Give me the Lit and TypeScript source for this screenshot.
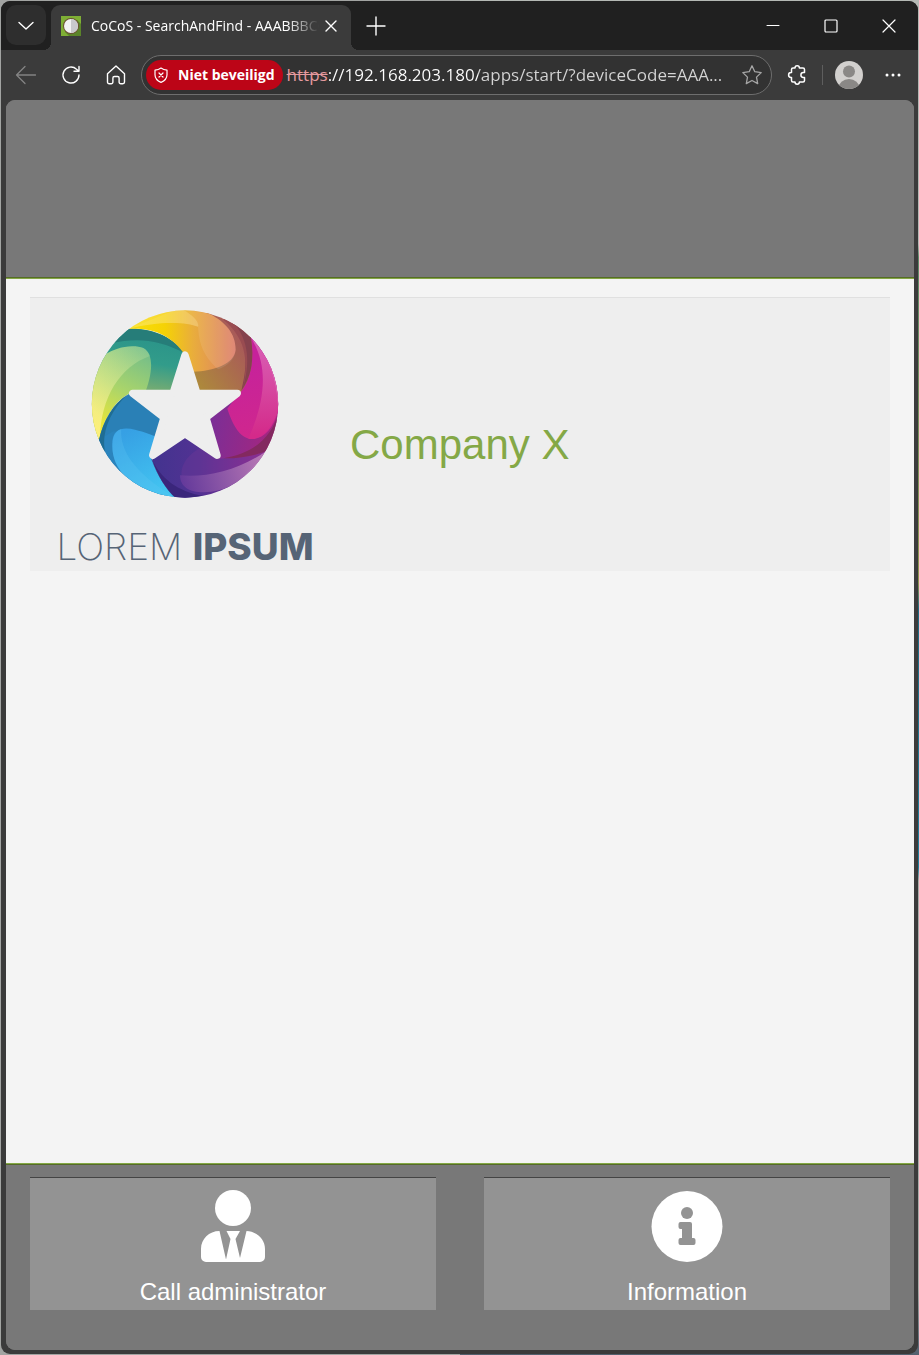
import { LitElement, html, css, svg } from "lit";
import { customElement, property } from "lit/decorators.js";

@customElement("company-logo")
class CompanyLogo extends LitElement {
  static styles = css`
    :host { display: flex; flex-direction: column; align-items: center; padding-top: 10px; }
    .wheel { display: block; width: 188px; height: 190px; }
    .name {
      margin-top: 24px;
      font: 200 37px/46px Inter, "Open Sans", sans-serif;
      color: #566476;
      white-space: nowrap;
    }
    .name b { font-weight: 800; }
  `;

  render() {
    return html`
      <svg class="wheel" viewBox="33 46 564 570" role="img" aria-label="Star wheel">
        <defs>
          <clipPath id="disc"><ellipse cx="315" cy="328" rx="279.5" ry="281" /></clipPath>
          <linearGradient id="gOrange" gradientUnits="userSpaceOnUse" x1="150" y1="0" x2="466" y2="0">
            <stop offset="0" stop-color="#f8e008" /><stop offset=".33" stop-color="#f5d205" />
            <stop offset=".6" stop-color="#e9ad3c" /><stop offset="1" stop-color="#dc7d6a" />
          </linearGradient>
          <linearGradient id="gBrown" gradientUnits="userSpaceOnUse" x1="345" y1="250" x2="500" y2="150">
            <stop offset="0" stop-color="#ad883c" /><stop offset="1" stop-color="#a8585a" />
          </linearGradient>
          <linearGradient id="gTeal" gradientUnits="userSpaceOnUse" x1="230" y1="120" x2="200" y2="290">
            <stop offset="0" stop-color="#2a9389" /><stop offset=".5" stop-color="#329c8a" /><stop offset="1" stop-color="#7bad70" />
          </linearGradient>
          <linearGradient id="gGreen" gradientUnits="userSpaceOnUse" x1="180" y1="160" x2="60" y2="400">
            <stop offset="0" stop-color="#72bd8b" /><stop offset=".5" stop-color="#a9d46b" /><stop offset="1" stop-color="#f0e834" />
          </linearGradient>
          <linearGradient id="gPale" gradientUnits="userSpaceOnUse" x1="40" y1="350" x2="205" y2="170">
            <stop offset="0" stop-color="#fff29a" stop-opacity=".7" /><stop offset="1" stop-color="#d2eda5" stop-opacity=".2" />
          </linearGradient>
          <linearGradient id="gSky" gradientUnits="userSpaceOnUse" x1="140" y1="410" x2="240" y2="600">
            <stop offset="0" stop-color="#36a0e4" /><stop offset="1" stop-color="#43c5f1" />
          </linearGradient>
          <linearGradient id="gPurple" gradientUnits="userSpaceOnUse" x1="230" y1="0" x2="550" y2="0">
            <stop offset="0" stop-color="#44338f" /><stop offset=".4" stop-color="#523293" /><stop offset="1" stop-color="#8b2c90" />
          </linearGradient>
          <linearGradient id="gLilac" gradientUnits="userSpaceOnUse" x1="300" y1="570" x2="550" y2="500">
            <stop offset="0" stop-color="#62389a" /><stop offset="1" stop-color="#b777b4" />
          </linearGradient>
          <linearGradient id="gPlum" gradientUnits="userSpaceOnUse" x1="390" y1="400" x2="580" y2="440">
            <stop offset="0" stop-color="#7c2e96" /><stop offset="1" stop-color="#a5267f" />
          </linearGradient>
          <linearGradient id="gMagenta" gradientUnits="userSpaceOnUse" x1="500" y1="200" x2="560" y2="430">
            <stop offset="0" stop-color="#c6229b" /><stop offset="1" stop-color="#d0278d" />
          </linearGradient>
          <linearGradient id="gPink" gradientUnits="userSpaceOnUse" x1="550" y1="150" x2="560" y2="420">
            <stop offset="0" stop-color="#d95cb4" /><stop offset=".5" stop-color="#d6469f" /><stop offset="1" stop-color="#d42a8a" />
          </linearGradient>
        </defs>
        <g clip-path="url(#disc)">
          <path fill="url(#gTeal)" d="M130 103 C215 96 280 130 318 180 L270 300 L150 290 C100 320 70 380 58 434 L20 430 V60Z" />
          <path fill="#267d79" d="M120 104 C215 94 275 125 318 178 C235 130 160 130 95 146Z" />
          <path fill="url(#gGreen)" d="M50 196 C110 152 160 150 190 160 C226 180 215 245 193 300 L150 296 C100 320 70 380 58 434 L20 430 V196Z" />
          <path fill="url(#gPale)" d="M50 196 C110 152 160 150 190 160 C200 165 207 175 210 184 C120 215 62 310 60 430 L20 430 V196Z" />
          <path fill="#2a80b6" d="M58 434 C70 380 100 325 150 296 L255 375 L216 495 C235 550 268 595 294 612 L200 640 L20 500Z" />
          <path fill="#1f6d94" d="M57 434 C70 380 98 327 142 300 C88 350 62 420 76 475 C100 545 170 590 240 612 L100 600 L30 480Z" />
          <path fill="#2b84bd" d="M75 425 C66 480 100 540 160 575 L260 615 L215 490 L225 425 L100 410Z" />
          <path fill="url(#gSky)" d="M97 450 C96 400 130 397 165 405 C195 412 213 420 235 428 L212 490 C232 545 265 595 292 614 L230 600 C160 575 95 530 97 450Z" />
          <path fill="#62c7f5" fill-opacity=".25" d="M124 402 C117 480 185 550 290 611 L230 602 C150 575 94 520 97 450 C98 420 110 407 124 402Z" />
          <path fill="url(#gPurple)" d="M216 495 L315 415 L420 485 C480 490 530 482 570 462 L540 580 L350 640 L292 612 C265 590 235 550 216 495Z" />
          <path fill="#3a267b" d="M216 494 C240 548 290 592 375 605 L292 615 C262 590 235 550 216 494Z" />
          <path fill="#8a3c9a" fill-opacity=".22" d="M305 545 C300 510 325 480 360 460 L420 490 C480 490 530 482 560 468 C480 535 380 550 305 545Z" />
          <path fill="url(#gLilac)" d="M300 542 C380 550 480 525 560 468 C530 520 500 548 490 556 C410 605 300 610 300 542Z" />
          <path fill="#d19aca" fill-opacity=".25" d="M440 585 C485 555 520 520 557 472 L580 490 L500 590Z" />
          <path fill="url(#gPlum)" d="M508 118 L620 200 L610 440 L556 470 C520 486 470 492 410 492 L380 375 L470 290 C520 250 520 180 508 118Z" />
          <path fill="#832960" d="M600 340 C580 420 530 475 430 491 C480 492 530 482 560 468 L620 420Z" />
          <path fill="url(#gMagenta)" d="M508 118 L620 200 L600 330 C585 400 550 435 515 433 C475 430 455 380 442 342 L480 292 C515 250 525 190 508 118Z" />
          <path fill="url(#gPink)" d="M508 122 C565 205 560 310 505 432 C550 440 583 390 600 330 L610 200Z" />
          <path fill="#f0b4dc" fill-opacity=".34" d="M508 122 C560 170 590 245 594 335 L620 280 L600 160Z" />
          <path fill="url(#gBrown)" d="M380 48 L470 70 L512 126 C525 200 510 255 482 292 L360 300 L335 230Z" />
          <path fill="#85424d" d="M448 70 L512 126 C525 195 512 250 484 288 C505 205 505 135 448 78Z" />
          <path fill="#994c51" d="M440 68 L458 80 C510 140 510 210 488 284 C508 190 494 128 430 75Z" />
          <path fill="url(#gOrange)" d="M144 103 L160 40 H370 L390 58 C435 82 467 115 467 165 C462 210 400 228 340 231 L315 180 C275 125 225 97 144 103Z" />
          <path fill="#ffe9a0" fill-opacity=".28" d="M144 103 C230 80 315 80 354 96 C360 80 330 55 300 40 L160 60Z" />
          <path fill="#fff" fill-opacity=".09" d="M144 103 C230 80 315 80 354 96 C357 140 365 180 415 224 C445 212 464 195 467 165 C467 115 435 82 390 58 L300 40Z" />
        </g>
        <path fill="#eee" stroke="#eee" stroke-width="22" stroke-linejoin="round"
          d="M315 181 L351 296 H472 L378 369 L411 482 L315 417 L218 482 L252 369 L158 296 H279Z" />
      </svg>
      <div class="name">LOREM <b>IPSUM</b></div>
    `;
  }
}

@customElement("browser-bar")
class BrowserBar extends LitElement {
  static styles = css`
    :host { display: block; font-family: "Open Sans", "Noto Sans", sans-serif; color: #fff; }
    button { all: unset; box-sizing: border-box; display: flex; align-items: center; justify-content: center; cursor: pointer; flex: none; }
    svg { display: block; flex: none; fill: none; stroke: currentColor; stroke-linecap: round; stroke-linejoin: round; }
    .solid { stroke: none; }
    .tabs { display: flex; height: 49px; padding: 4px 0 0 5px; box-sizing: border-box; background: #202020; }
    .menu { width: 40px; height: 40px; padding-top: 2px; border-radius: 10px; background: #2e2e2e; }
    .tab {
      position: relative; display: flex; align-items: center; box-sizing: border-box;
      width: 300px; height: 45px; margin-left: 5px; padding: 0 8px 4px 10px;
      background: #3b3b3b; border-radius: 9px 9px 0 0;
    }
    .tab::before, .tab::after { content: ""; position: absolute; bottom: 0; width: 8px; height: 8px; }
    .tab::before { left: -8px; background: radial-gradient(circle at 0 0, #202020 8px, #3b3b3b 8px); }
    .tab::after { right: -8px; background: radial-gradient(circle at 100% 0, #202020 8px, #3b3b3b 8px); }
    .title {
      flex: 1; min-width: 0; margin-left: 10px; overflow: hidden; white-space: nowrap;
      font-size: 14px; line-height: 20px;
      -webkit-mask-image: linear-gradient(90deg, #000 86%, transparent);
      mask-image: linear-gradient(90deg, #000 86%, transparent);
    }
    .close { width: 24px; height: 24px; }
    .new { width: 50px; height: 41px; }
    .space { flex: 1; }
    .win { width: 58px; height: 42px; }
    .tools { display: flex; align-items: center; height: 50px; padding: 0 7px 0 2px; background: #3b3b3b; }
    .tool { width: 45px; height: 40px; }
    .back { color: #838383; }
    .address {
      flex: 1; min-width: 0; display: flex; align-items: center; box-sizing: border-box;
      height: 40px; margin-left: 3px; padding: 0 8px 0 4px;
      border: 1px solid #6e6e6e; border-radius: 20px; background: #323232;
    }
    .warning {
      height: 30px; padding: 0 8px 0 6px; gap: 8px; border-radius: 15px; background: #bc0517;
      font-size: 14px; line-height: 20px; font-weight: 700; white-space: nowrap;
    }
    .field { flex: 1; min-width: 0; display: flex; align-items: center; margin-left: 4px; font-size: 17px; line-height: 24px; }
    .scheme { color: #e69a9f; text-decoration: line-through; }
    .url {
      flex: 1; min-width: 0; height: 24px; border: 0; padding: 0; margin: 0; outline: 0;
      font: inherit; color: transparent;
      background: linear-gradient(90deg, #fff 150px, #d5d5d5 150px);
      -webkit-background-clip: text; background-clip: text;
    }
    .star { width: 22px; height: 30px; color: #a5a5a5; }
    .extensions { width: 50px; height: 40px; }
    .line { width: 1px; height: 20px; background: #5e5e5e; }
    .profile { width: 52px; height: 40px; }
    .more { width: 36px; height: 40px; }
  `;

  render() {
    return html`
      <div class="tabs">
        <button class="menu" aria-label="Tab menu">
          <svg width="16" height="10" viewBox="0 0 16 10" stroke-width="1.4"><path d="M1 1.500 8 8l7-6.500" /></svg>
        </button>
        <div class="tab">
          <svg class="solid" width="20" height="20" viewBox="0 0 20 20">
            <path fill="#7faf35" d="M0 0h20v20H0z" /><path fill="#5b8429" d="M4 16 16 4l4 4v12H8z" />
            <circle cx="10" cy="10" r="8" fill="#6c5133" /><circle cx="10" cy="10" r="7" fill="#f2f2f2" />
            <path fill="#c9c9cc" d="M10 3a7 7 0 0 1 0 14z" />
          </svg>
          <span class="title">CoCoS - SearchAndFind - AAABBBCCC</span>
          <button class="close" aria-label="Close tab">
            <svg width="12" height="12" viewBox="0 0 12 12" stroke-width="1.4"><path d="m1 1 10 10M11 1 1 11" /></svg>
          </button>
        </div>
        <button class="new" aria-label="New tab">
          <svg width="20" height="20" viewBox="0 0 20 20" stroke-width="1.4"><path d="M10 1v18M1 10h18" /></svg>
        </button>
        <div class="space"></div>
        <button class="win" aria-label="Minimize">
          <svg width="14" height="14" viewBox="0 0 14 14"><path d="M1 6.500h12" /></svg>
        </button>
        <button class="win" aria-label="Maximize">
          <svg width="14" height="14" viewBox="0 0 14 14" stroke-width="1.2"><rect x="1" y="1" width="12" height="12" rx="1" /></svg>
        </button>
        <button class="win" aria-label="Close">
          <svg width="14" height="14" viewBox="0 0 14 14" stroke-width="1.2"><path d="m1 1 12 12M13 1 1 13" /></svg>
        </button>
      </div>
      <div class="tools">
        <button class="tool back" aria-label="Back">
          <svg width="22" height="20" viewBox="0 0 22 20" stroke-width="1.3"><path d="M20.500 10h-19M10 1.500 1.500 10l8.500 8.500" /></svg>
        </button>
        <button class="tool" aria-label="Reload">
          <svg width="20" height="20" viewBox="0 0 20 20" stroke-width="1.4"><path d="M18 10a8 8 0 1 1-2.500-5.800L17.500 6M18 1.500V6.300h-5" /></svg>
        </button>
        <button class="tool" aria-label="Home">
          <svg width="20" height="20" viewBox="0 0 20 20" stroke-width="1.4"><path d="M1.500 8.700 10 1l8.500 7.700V17a1.700 1.700 0 0 1-1.700 1.700h-2a1.700 1.700 0 0 1-1.700-1.700v-4c0-1-.5-1.500-1.500-1.500H8.400c-1 0-1.500.5-1.500 1.500v4a1.700 1.700 0 0 1-1.700 1.700h-2A1.700 1.700 0 0 1 1.500 17z" /></svg>
        </button>
        <div class="address">
          <button class="warning">
            <svg width="18" height="18" viewBox="0 0 18 18" stroke-width="1.2"><path d="M9 2c1.800 1.400 3.800 2 6 2.100v4.700c0 3.600-2.200 6-6 7.600-3.800-1.600-6-4-6-7.600V4.100C5.200 4 7.200 3.400 9 2zM7 7l4 4M11 7l-4 4" /></svg>
            Niet beveiligd
          </button>
          <label class="field">
            <span class="scheme">https</span>
            <input class="url" type="text" aria-label="Address" value="://192.168.203.180/apps/start/?deviceCode=AAA..." />
          </label>
          <button class="star" aria-label="Favorite">
            <svg width="22" height="22" viewBox="0 0 22 22" stroke-width="1.3"><path d="m11 1.800 2.800 5.900 6.400.9-4.700 4.500 1.200 6.500-5.700-3.100-5.700 3.100 1.200-6.500L1.800 8.600l6.400-.9z" /></svg>
          </button>
        </div>
        <button class="extensions" aria-label="Extensions">
          <svg width="20" height="20" viewBox="0 0 20 20" stroke-width="1.5"><path d="M6 3h2a2.200 2.200 0 0 1 4.400 0H16a1.500 1.500 0 0 1 1.500 1.500V7.600h-1.200a2.300 2.300 0 0 0 0 4.800h1.200V15.500A1.500 1.500 0 0 1 16 17h-3.600a2.200 2.200 0 0 1-4.400 0H6a1.500 1.500 0 0 1-1.500-1.500V12.400H4a2.300 2.300 0 0 1 0-4.800h.5V4.500A1.500 1.500 0 0 1 6 3z" /></svg>
        </button>
        <span class="line"></span>
        <button class="profile" aria-label="Profile">
          <svg class="solid" width="28" height="28" viewBox="0 0 28 28">
            <defs><clipPath id="face"><circle cx="14" cy="14" r="14" /></clipPath></defs>
            <g clip-path="url(#face)"><path fill="#d2d0ce" d="M0 0h28v28H0z" /><circle cx="14" cy="10.500" r="6" fill="#8a8886" /><ellipse cx="14" cy="27" rx="10.500" ry="9" fill="#8a8886" /></g>
          </svg>
        </button>
        <button class="more" aria-label="More">
          <svg class="solid" width="16" height="4" viewBox="0 0 16 4"><g fill="#fff"><circle cx="2" cy="2" r="1.500" /><circle cx="8" cy="2" r="1.500" /><circle cx="14" cy="2" r="1.500" /></g></svg>
        </button>
      </div>
    `;
  }
}

const personIcon = svg`
  <svg width="72" height="72" viewBox="0 0 72 72" fill="#fff" aria-hidden="true">
    <circle cx="36" cy="18" r="18" />
    <path d="M22.500 41 29 69.500 33.500 49 29.500 41H43L38.500 49 43 68 49.500 41C60 41.500 68 49 68 59v8a5 5 0 0 1-5 5H9a5 5 0 0 1-5-5v-8c0-10 8-18 18.500-18z" />
  </svg>`;

const infoIcon = svg`
  <svg width="72" height="72" viewBox="0 0 72 72" fill="#fff" aria-hidden="true">
    <circle cx="36" cy="36.500" r="35.500" />
    <g fill="#939393"><circle cx="36" cy="23" r="6" />
    <path d="M29.500 32h9.500a2 2 0 0 1 2 2v14h1.500a2 2 0 0 1 2 2v3a2 2 0 0 1-2 2h-13a2 2 0 0 1-2-2v-3a2 2 0 0 1 2-2H31v-9h-1.500a2 2 0 0 1-2-2v-3a2 2 0 0 1 2-2z" /></g>
  </svg>`;

@customElement("app-root")
class AppRoot extends LitElement {
  @property() company = "Company X";

  static styles = css`
    :host {
      display: flex; box-sizing: border-box; min-height: 100vh; padding: 1px;
      font-family: "Liberation Sans", Arial, sans-serif;
      background: linear-gradient(90deg, #a2a4a2 50%, transparent 50%),
        linear-gradient(#b4b8b4 18%, #5d8a6a 19%, #8c9450 43%, #1f6b83 45%, #1f7f9c 64%, #a8aca8 65%, #a8aca8 95%, #52606e);
    }
    .window { flex: 1; min-width: 0; display: flex; flex-direction: column; overflow: hidden; border-radius: 9px; background: #3b3b3b; }
    .page {
      flex: 1; display: flex; flex-direction: column; overflow: hidden;
      margin: 0 4px 4px 5px; border-radius: 9px; background: #787878;
    }
    .top { height: 177px; border-bottom: 1px solid #566b28; background: #787878; }
    .content { flex: 1; padding: 18px 24px; border-top: 1px solid #84a844; border-bottom: 1px solid #84a844; background: #f4f4f4; }
    .card {
      display: flex; align-items: center; box-sizing: border-box; height: 274px; gap: 38px;
      padding: 0 28px; border-top: 1px solid #e0e0e0; background: #eee;
    }
    .logo { width: 254px; }
    .company { margin: 0; padding-top: 20px; font-size: 42px; line-height: 48px; font-weight: 400; color: #84a846; }
    .actions {
      display: grid; grid-template-columns: 1fr 1fr; gap: 48px;
      padding: 12px 24px 40px; border-top: 1px solid #566b28; background: #787878;
    }
    .action {
      display: flex; flex-direction: column; align-items: center; gap: 15px;
      margin: 0; padding: 12px 0 3px; border: 0; border-top: 1px solid #444; background: #939393;
      color: #fff; font: 24px/30px "Liberation Sans", Arial, sans-serif; cursor: pointer;
    }
  `;

  render() {
    return html`
      <div class="window">
        <browser-bar></browser-bar>
        <div class="page">
          <header class="top"></header>
          <main class="content">
            <section class="card">
              <company-logo class="logo"></company-logo>
              <h1 class="company">${this.company}</h1>
            </section>
          </main>
          <footer class="actions">
            <button class="action">${personIcon}<span>Call administrator</span></button>
            <button class="action">${infoIcon}<span>Information</span></button>
          </footer>
        </div>
      </div>
    `;
  }
}
